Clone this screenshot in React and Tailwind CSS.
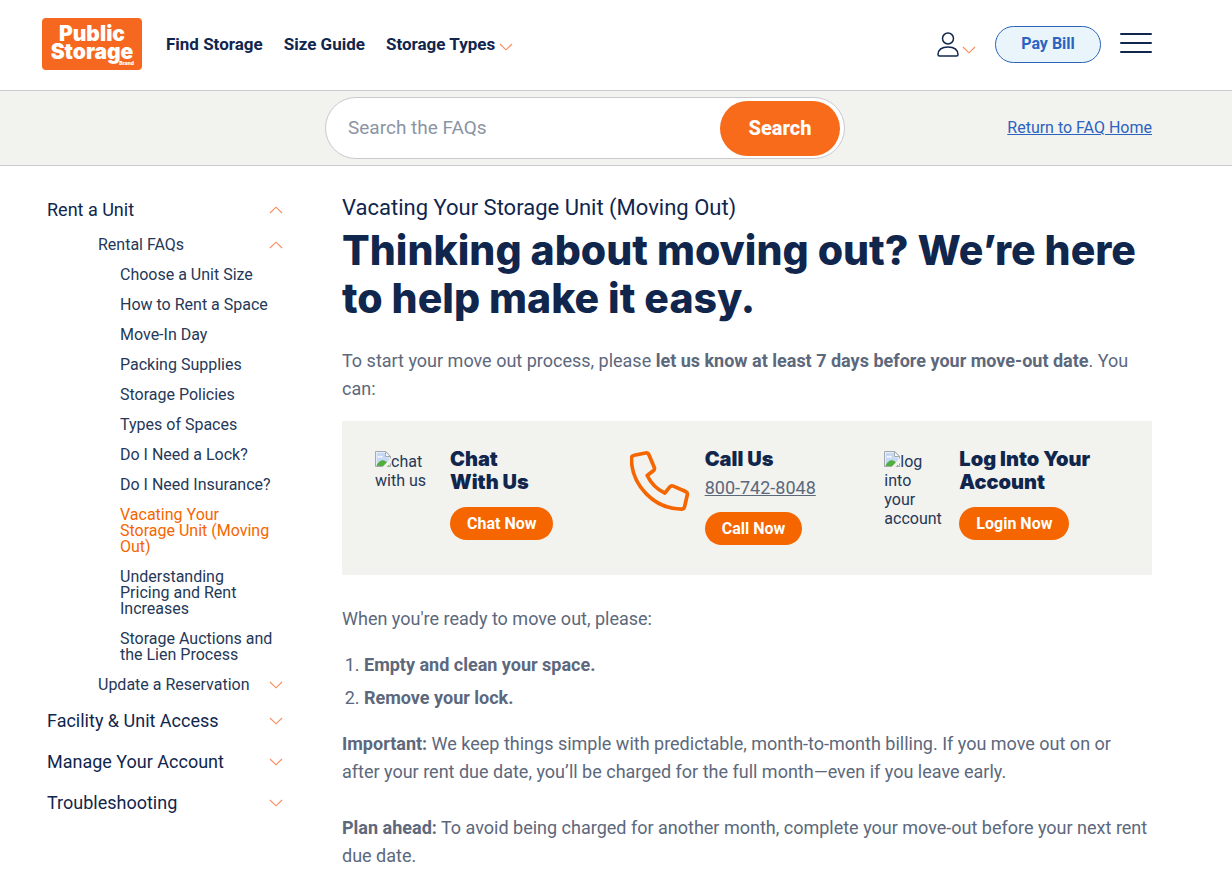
import React from "react";

function Chevron({ up = false }) {
  return (
    <svg viewBox="0 0 14 8" className="h-2 w-[14px] shrink-0" fill="none" stroke="#fb8b5a" strokeWidth="1.1" aria-hidden="true">
      <path d={up ? "M1 7 7 1.2 13 7" : "M1 1 7 6.8 13 1"} />
    </svg>
  );
}

function BrokenImage() {
  return (
    <svg viewBox="0 0 16 16" className="inline-block h-4 w-4 align-baseline" aria-hidden="true">
      <path d="M.5.5h10.2l4.8 4.8v10.2H.5z" fill="#fff" stroke="#a5a9ad" />
      <path d="M1.500 1.500h9v4.800h4v8.200h-13z" fill="#c5d9f5" />
      <path d="M2.500 6.500c0-1.500 1.700-2 2.400-1C6.200 4.300 8 5 7.800 6.500z" fill="#fff" />
      <path d="M1.500 15c1-3.500 4-6 6.500-5.800 2.500.2 5 2.600 6.500 5.800z" fill="#53ae3f" />
      <path d="M16 7 7.500 16h4L16 12z" fill="#f2f2ee" />
      <path d="M10.500.7v4.800h4.800z" fill="#fff" stroke="#a5a9ad" />
    </svg>
  );
}

function PhoneIcon() {
  return (
    <svg viewBox="0 0 60 60" className="h-[60px] w-[60px]" fill="none" stroke="#f56600" strokeWidth="3.7" strokeLinejoin="round" aria-hidden="true">
      <path d="M4.200 4.300 15.500 2q2.400-.4 3.400 1.800l5.300 12.400q.8 2.100-.9 3.500l-6.100 4.800c3.700 7.700 9.900 13.900 17.600 17.600l5-6.200q1.400-1.700 3.500-.8l12.300 5.400q2.200 1 1.700 3.300l-2.700 11.800q-.6 2.500-3 2.500C24.500 58.100 1.400 34.500 1.400 7.300q0-2.500 2.800-3z" />
    </svg>
  );
}

const articles = [
  "Choose a Unit Size",
  "How to Rent a Space",
  "Move-In Day",
  "Packing Supplies",
  "Storage Policies",
  "Types of Spaces",
  "Do I Need a Lock?",
  "Do I Need Insurance?",
  "Vacating Your Storage Unit (Moving Out)",
  "Understanding Pricing and Rent Increases",
  "Storage Auctions and the Lien Process",
];
const current = "Vacating Your Storage Unit (Moving Out)";

function Header() {
  return (
    <header className="flex h-[91px] items-center justify-between border-b border-[#c9cad0] pr-20 pb-[2px] pl-[42px]">
      <div className="flex items-center gap-6">
        <a href="#home" className="flex h-[52px] w-[100px] flex-col items-center rounded bg-[#f66820] pt-[7px] font-[Inter] text-[21px] leading-[18px] font-black text-white">
          <span>Public</span>
          <span>Storage</span>
          <span className="self-end pr-2 text-[5px] leading-[5px]">Brand</span>
        </a>
        <nav className="flex items-center gap-[21px] pt-[2px] text-[17px] font-bold text-[#10264d]">
          <a href="#find">Find Storage</a>
          <a href="#size">Size Guide</a>
          <button type="button" className="flex items-center gap-1">
            <span>Storage Types</span>
            <span className="pt-1"><Chevron /></span>
          </button>
        </nav>
      </div>
      <div className="flex items-center gap-[19px]">
        <button type="button" aria-label="Account" className="flex items-end gap-[3px]">
          <svg viewBox="0 0 22 25" className="h-[25px] w-[22px]" fill="none" stroke="#10264d" strokeWidth="1.500" aria-hidden="true">
            <circle cx="11" cy="6.500" r="5.500" />
            <path d="M1 22.500C1.300 17.500 5.300 15 11 15s9.700 2.500 10 7.500q0 1.500-1.500 1.500h-17Q1 24 1 22.500z" />
          </svg>
          <span className="pb-[3px]"><Chevron /></span>
        </button>
        <a href="#pay" className="flex h-[37px] w-[106px] items-center justify-center rounded-full border border-[#2b63b8] bg-[#eaf5fb] text-base font-bold text-[#2b63c0]">
          Pay Bill
        </a>
        <button type="button" aria-label="Menu" className="mb-[2px] flex h-5 w-8 flex-col justify-between">
          <span className="h-[2px] w-full rounded bg-[#10264d]" />
          <span className="h-[2px] w-full rounded bg-[#10264d]" />
          <span className="h-[2px] w-full rounded bg-[#10264d]" />
        </button>
      </div>
    </header>
  );
}

function SearchBar() {
  return (
    <div className="grid h-[75px] grid-cols-[minmax(0,1fr)_520px_minmax(0,1fr)] items-center border-b border-[#c9cad0] bg-[#f2f2ee] pr-20 pl-[18px]">
      <form className="col-start-2 flex h-[62px] items-center rounded-full border border-[#c9cad0] bg-white pr-1" onSubmit={(e) => e.preventDefault()}>
        <input
          type="search"
          aria-label="Search the FAQs"
          placeholder="Search the FAQs"
          className="min-w-0 flex-1 bg-transparent pl-[22px] text-[19px] outline-none placeholder:text-[#8b94a3]"
        />
        <button type="submit" className="h-[55px] w-[120px] rounded-full bg-[#f76b1a] text-[20px] font-extrabold text-white">Search</button>
      </form>
      <a href="#faq" className="justify-self-end text-base text-[#2b63c0] underline">Return to FAQ Home</a>
    </div>
  );
}

function Sidebar() {
  return (
    <nav aria-label="FAQ topics" className="w-[236px] shrink-0 pt-[31px] text-lg text-[#10264d]">
      <button type="button" className="flex h-[26px] w-full items-center justify-between">
        Rent a Unit<Chevron up />
      </button>
      <div className="pl-[51px] text-base text-[#253858]">
        <button type="button" className="mt-[9px] flex h-[26px] w-full items-center justify-between">
          Rental FAQs<Chevron up />
        </button>
        <ul className="mt-[9px] flex flex-col gap-[14px] pr-[9px] pl-[22px] leading-4">
          {articles.map((a) => (
            <li key={a}>
              <a href="#article" className={a === current ? "block text-[#f56600]" : "block"}>{a}</a>
            </li>
          ))}
        </ul>
        <button type="button" className="mt-[9px] flex h-[26px] w-full items-center justify-between">
          Update a Reservation<Chevron />
        </button>
      </div>
      <div className="mt-[10px] flex flex-col gap-[15px]">
        {["Facility & Unit Access", "Manage Your Account", "Troubleshooting"].map((t) => (
          <button key={t} type="button" className="flex h-[26px] w-full items-center justify-between">
            {t}<Chevron />
          </button>
        ))}
      </div>
    </nav>
  );
}

function Contact({ icon, title, phone, action }) {
  return (
    <div className="flex gap-[15px] px-[10px]">
      <div className="w-[60px] shrink-0 text-base leading-[19px] text-[#253858]">{icon}</div>
      <div>
        <h2 className="-mt-[3px] pb-[3px] font-[Inter] text-[20px] leading-[23px] font-black text-[#10264d]">{title}</h2>
        {phone && <a href="tel:8007428048" className="block text-lg leading-7 text-[#5c687c] underline">{phone}</a>}
        <button type="button" className="mt-[10px] h-[33px] rounded-full bg-[#f56600] px-[17px] text-base font-bold text-white">{action}</button>
      </div>
    </div>
  );
}

export default function App() {
  return (
    <div className="min-h-screen bg-white font-[Roboto,sans-serif]">
      <Header />
      <SearchBar />
      <div className="flex gap-[59px] pr-20 pl-[47px]">
        <Sidebar />
        <main className="min-w-0 flex-1 pt-[26px] text-lg leading-7 text-[#5c687c]">
          <p className="text-[22px] leading-8 text-[#10264d]">Vacating Your Storage Unit (Moving Out)</p>
          <h1 className="mt-[2px] font-[Inter] text-[41px] leading-[48px] font-[850] text-[#10264d]">
            Thinking about moving out? We’re here to help make it easy.
          </h1>
          <p className="mt-[25px]">
            To start your move out process, please <strong>let us know at least 7 days before your move-out date</strong>. You can:
          </p>
          <section className="mt-[18px] grid min-h-[154px] grid-cols-3 bg-[#f2f2ee] px-[23px] pt-[30px] pb-[29px]">
            <Contact icon={<><BrokenImage />chat with us</>} title={<>Chat<br />With Us</>} action="Chat Now" />
            <Contact icon={<PhoneIcon />} title="Call Us" phone="800-742-8048" action="Call Now" />
            <Contact icon={<><BrokenImage />log into your account</>} title="Log Into Your Account" action="Login Now" />
          </section>
          <p className="mt-[30px]">When you're ready to move out, please:</p>
          <ol className="mt-[18px] flex list-decimal flex-col gap-[5px] pl-[22px]">
            <li><strong>Empty and clean your space.</strong></li>
            <li><strong>Remove your lock.</strong></li>
          </ol>
          <p className="mt-[18px]">
            <strong>Important:</strong> We keep things simple with predictable, month-to-month billing. If you move out on or after your rent due date, you’ll be charged for the full month—even if you leave early.
          </p>
          <p className="mt-7">
            <strong>Plan ahead:</strong> To avoid being charged for another month, complete your move-out before your next rent due date.
          </p>
        </main>
      </div>
    </div>
  );
}
